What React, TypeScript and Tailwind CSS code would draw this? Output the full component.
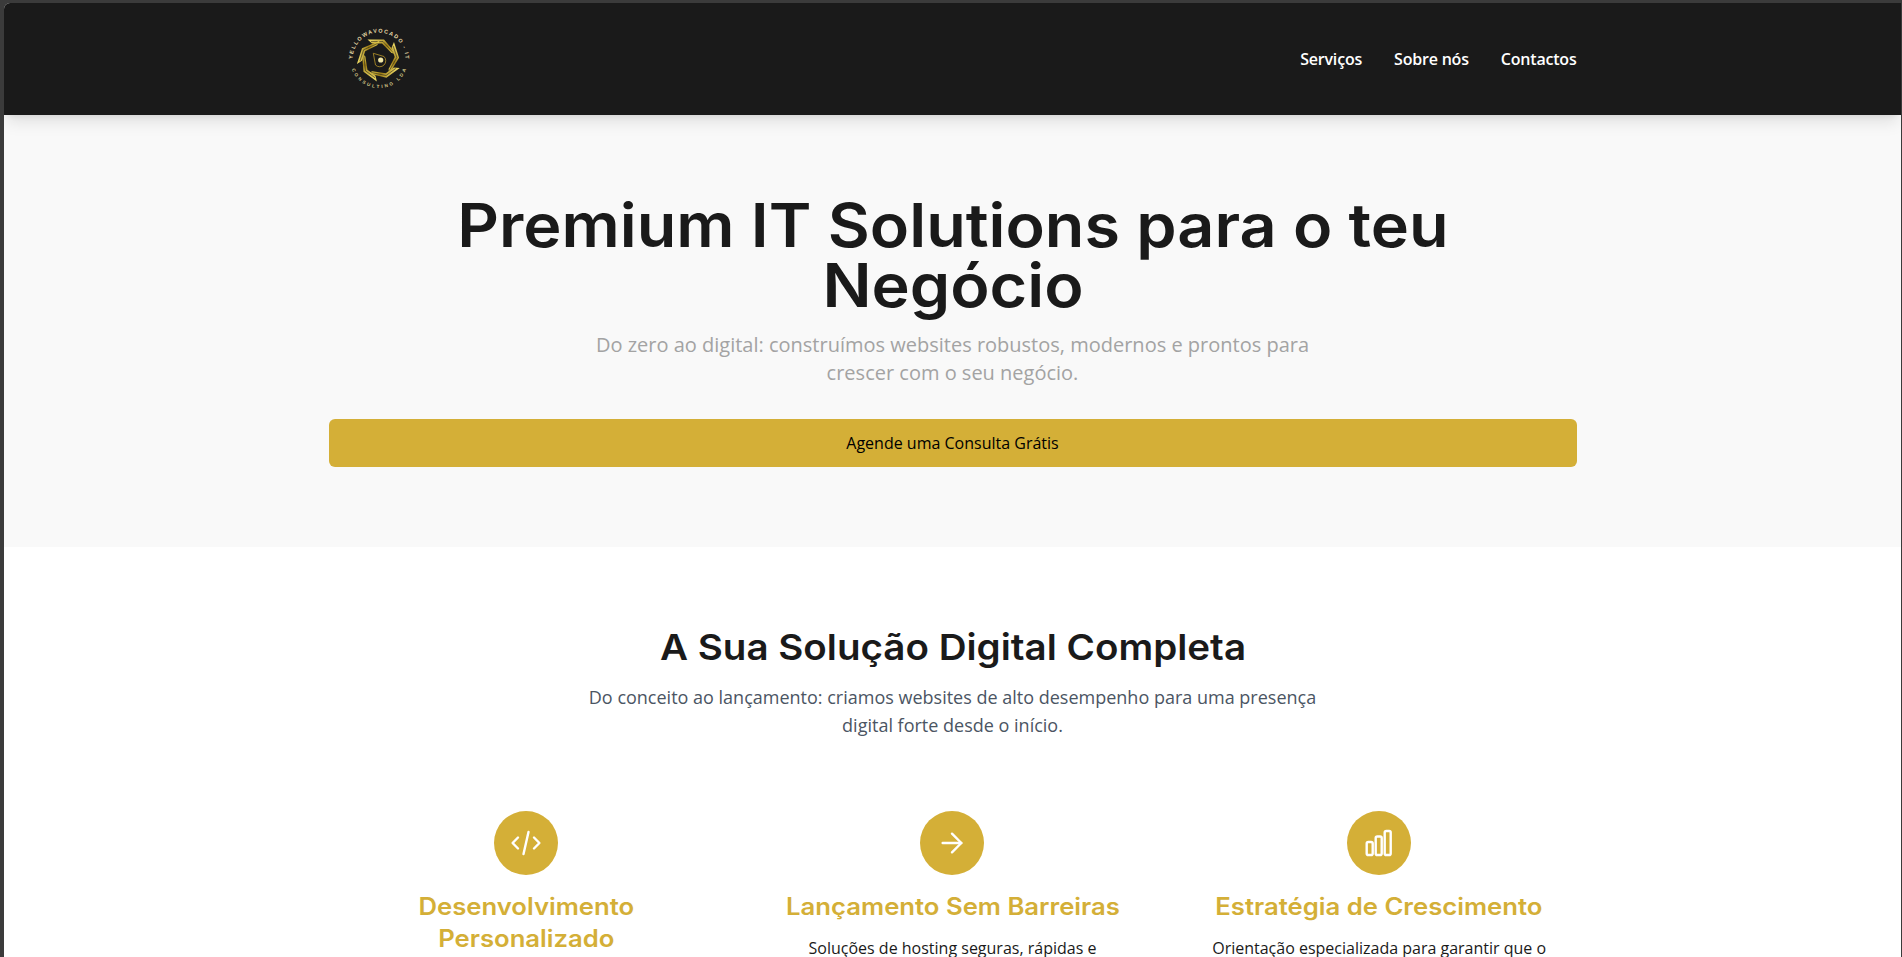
import { ArrowRight } from "lucide-react"

const heading = "font-['Inter','Liberation_Sans',sans-serif]"

const services = [
  {
    title: "Desenvolvimento Personalizado",
    text: "",
    icon: <CodeIcon />,
  },
  {
    title: "Lançamento Sem Barreiras",
    text: "Soluções de hosting seguras, rápidas e",
    icon: <ArrowRight size={32} strokeWidth={1.8} />,
  },
  {
    title: "Estratégia de Crescimento",
    text: "Orientação especializada para garantir que o",
    icon: <BarsIcon />,
  },
]

function CodeIcon() {
  return (
    <svg width="32" height="32" viewBox="0 0 32 32" fill="none" stroke="currentColor" strokeWidth="2.4" strokeLinecap="round" strokeLinejoin="round">
      <path d="M8 10.5 2.6 16 8 21.5" />
      <path d="M24 10.5 29.4 16 24 21.5" />
      <path d="M18.5 5 13.5 27" />
    </svg>
  )
}

function BarsIcon() {
  return (
    <svg width="30" height="30" viewBox="0 0 30 30" fill="none" stroke="currentColor" strokeWidth="2.4" strokeLinejoin="round">
      <rect x="2.7" y="14" width="6" height="13" rx="1.6" />
      <rect x="11.7" y="8.5" width="6" height="18.5" rx="1.6" />
      <rect x="20.7" y="3" width="6" height="24" rx="1.6" />
    </svg>
  )
}

function Logo() {
  return (
    <svg width="70" height="70" viewBox="0 0 70 70">
      <defs>
        <linearGradient id="gold" x1="0" y1="0" x2="1" y2="1">
          <stop offset="0" stopColor="#f5e26b" />
          <stop offset="0.55" stopColor="#9c7c16" />
          <stop offset="1" stopColor="#efd852" />
        </linearGradient>
        <path id="ringTop" d="M8.6 35A26.4 26.4 0 0 1 61.4 35" />
        <path id="ringBottom" d="M7.7 45.3A29.2 29.2 0 0 0 62.3 45.3" />
      </defs>
      <text fontSize="5.4" fontWeight="700" fill="#e6dca8" fontFamily="Liberation Sans, sans-serif">
        <textPath href="#ringTop" textLength="82">YELLOWAVOCADO - IT</textPath>
      </text>
      <text fontSize="4.6" fontWeight="700" fill="#d9cc8c" fontFamily="Liberation Sans, sans-serif">
        <textPath href="#ringBottom" textLength="70">CONSULTING LDA</textPath>
      </text>
      {[0, 72, 144, 216, 288].map((deg) => (
        <g key={deg} transform={`rotate(${deg} 35 35)`}>
          <path d="M23.5 15.5 40 15.5 52.5 30 47.5 29 38 19.5 28 19.5Z" fill="url(#gold)" />
          <path d="M27 17.5 39 17.5 49.5 29" fill="none" stroke="#1a1a1a" strokeWidth="0.5" />
        </g>
      ))}
      <path d="M29.3 29.3 40 32.5A6 6 0 1 1 31.5 41Z" fill="#1a1a1a" stroke="#b8962a" strokeWidth="0.8" />
      <circle cx="36.7" cy="36" r="2.6" fill="#f3e9a8" />
    </svg>
  )
}

export default function App() {
  return (
    <div className="h-[957px] overflow-hidden bg-[#3b3b3b] pt-[3px] pr-px pl-[4px] font-['Open_Sans','Liberation_Sans',sans-serif]">
      <div className="h-full overflow-hidden rounded-tl-md bg-white">
        <header className="relative z-10 h-[112px] bg-[#1a1a1a] shadow-lg">
          <div className="mx-auto flex h-full w-[1280px] items-center justify-between px-4">
            <div className="ml-[15px] mt-[-1px]">
              <Logo />
            </div>
            <nav className="flex gap-8 text-base font-semibold tracking-[-0.2px] text-white">
              <a>Serviços</a>
              <a>Sobre nós</a>
              <a>Contactos</a>
            </nav>
          </div>
        </header>

        <section className="bg-[#f9f9f9] pt-20 pb-20">
          <div className="mx-auto w-[1280px] px-4 text-center">
            <h1 className={`${heading} mx-auto w-[1100px] scale-x-[1.078] text-[60px] leading-[60px] font-semibold text-[#1a1a1a]`}>
              Premium IT Solutions para o teu Negócio
            </h1>
            <p className="mx-auto mt-4 w-[768px] text-xl leading-7 text-[#a3a3a3]">
              Do zero ao digital: construímos websites robustos, modernos e prontos para crescer com o seu negócio.
            </p>
            <button className="mt-8 h-12 w-full rounded-md bg-[#d4af37] text-base font-medium text-black">
              Agende uma Consulta Grátis
            </button>
          </div>
        </section>

        <section className="pt-20">
          <div className="mx-auto w-[1280px] px-4">
            <div className="text-center">
              <h2 className={`${heading} scale-x-[1.071] text-4xl leading-10 font-semibold text-[#1a1a1a]`}>
                A Sua Solução Digital Completa
              </h2>
              <p className="mx-auto mt-4 w-[768px] text-lg leading-7 text-[#4b5563]">
                Do conceito ao lançamento: criamos websites de alto desempenho para uma presença digital forte desde o início.
              </p>
            </div>

            <div className="mt-[72px] grid grid-cols-3 gap-8">
              {services.map((s) => (
                <div key={s.title} className="flex flex-col items-center px-6 text-center">
                  <div className="flex h-16 w-16 items-center justify-center rounded-full bg-[#d4af37] text-white">
                    {s.icon}
                  </div>
                  <h3 className={`${heading} mt-4 scale-x-[1.07] text-2xl leading-8 font-semibold text-[#d4af37]`}>{s.title}</h3>
                  {s.text && <p className="mt-[13px] text-base leading-6 text-[#1a1a1a]">{s.text}</p>}
                </div>
              ))}
            </div>
          </div>
        </section>
      </div>
    </div>
  )
}
